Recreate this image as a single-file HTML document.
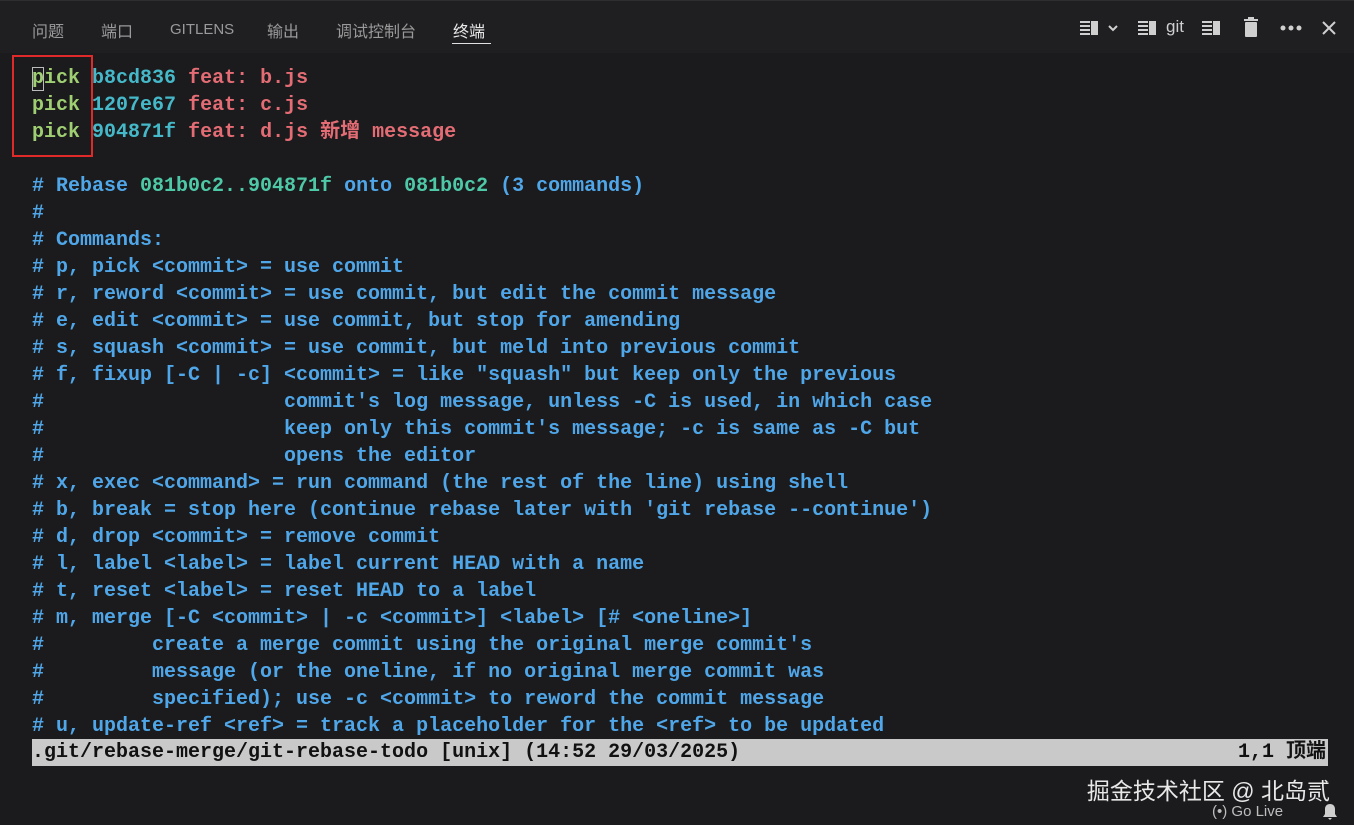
<!DOCTYPE html>
<html><head><meta charset="utf-8"><style>
*{margin:0;padding:0;box-sizing:border-box}
body{width:1354px;height:825px;background:#1b1b1d;overflow:hidden;position:relative;font-family:"Liberation Sans","Noto Sans CJK SC",sans-serif}
.top{position:absolute;left:0;top:0;width:1354px;height:53px;background:#1f1f22;border-top:1px solid #2e2e30}
.tab{position:absolute;top:17px;font-size:16px;color:#9a9a9a}
.tab.act{color:#e8e8e8}
.ul{position:absolute;left:452px;top:42px;width:39px;height:1px;background:#e0e0e0}
.term{position:absolute;left:32px;top:65px;font-family:"Liberation Mono","Noto Sans CJK SC",monospace;font-weight:bold;font-size:20px;line-height:27px;white-space:pre;color:#4fa6e8}
.g{color:#9fcf72}.h{color:#45b9c9}.r{color:#e46c74}.t{color:#4ec9a8}
.box{position:absolute;left:12px;top:55px;width:81px;height:102px;border:2px solid #e02a2a}
.cur{position:absolute;left:32px;top:67px;width:12px;height:24px;border:1px solid #bbb}
.status{position:absolute;left:32px;top:739px;width:1296px;height:27px;background:#c9c9c9;color:#111;font-family:"Liberation Mono","Noto Sans CJK SC",monospace;font-weight:bold;font-size:20px;line-height:27px;white-space:pre}
.ic{position:absolute;fill:#cfcfcf}
</style></head><body>
<div class="top">
<span class="tab" style="left:32px">问题</span>
<span class="tab" style="left:101px">端口</span>
<span class="tab" style="left:170px;font-size:15px;top:20px">GITLENS</span>
<span class="tab" style="left:267px">输出</span>
<span class="tab" style="left:336px">调试控制台</span>
<span class="tab act" style="left:453px">终端</span>
<div class="ul"></div>
<svg class="ic" style="left:1078px;top:17px" width="44" height="20"><rect x="2" y="3" width="10" height="2"/><rect x="2" y="7" width="10" height="2"/><rect x="2" y="11" width="10" height="2"/><rect x="2" y="15" width="10" height="2"/><rect x="13" y="3" width="7" height="14"/><path d="M31 8l4 4 4-4" stroke="#cfcfcf" stroke-width="2" fill="none"/></svg>
<svg class="ic" style="left:1136px;top:17px" width="22" height="20"><rect x="2" y="3" width="10" height="2"/><rect x="2" y="7" width="10" height="2"/><rect x="2" y="11" width="10" height="2"/><rect x="2" y="15" width="10" height="2"/><rect x="13" y="3" width="7" height="14"/></svg>
<span class="tab" style="left:1166px;color:#cfcfcf;font-size:17px;top:16px">git</span>
<svg class="ic" style="left:1200px;top:17px" width="22" height="20"><rect x="2" y="3" width="10" height="2"/><rect x="2" y="7" width="10" height="2"/><rect x="2" y="11" width="10" height="2"/><rect x="2" y="15" width="10" height="2"/><rect x="13" y="3" width="7" height="14"/></svg>
<svg class="ic" style="left:1242px;top:15px" width="18" height="24"><rect x="2" y="3" width="14" height="2"/><rect x="6" y="1" width="6" height="2"/><rect x="3" y="6" width="12" height="15" rx="1"/></svg>
<svg class="ic" style="left:1280px;top:22px" width="22" height="10"><circle cx="3" cy="5" r="2.5"/><circle cx="11" cy="5" r="2.5"/><circle cx="19" cy="5" r="2.5"/></svg>
<svg style="position:absolute;left:1321px;top:19px" width="16" height="16"><path d="M2 2l12 12M14 2L2 14" stroke="#cfcfcf" stroke-width="2"/></svg>
</div>
<div class="cur"></div>
<div class="term"><span class="g">pick</span> <span class="h">b8cd836</span> <span class="r">feat: b.js</span>
<span class="g">pick</span> <span class="h">1207e67</span> <span class="r">feat: c.js</span>
<span class="g">pick</span> <span class="h">904871f</span> <span class="r">feat: d.js 新增 message</span>

# Rebase <span class="t">081b0c2..904871f</span> onto <span class="t">081b0c2</span> (3 commands)
#
# Commands:
# p, pick &lt;commit&gt; = use commit
# r, reword &lt;commit&gt; = use commit, but edit the commit message
# e, edit &lt;commit&gt; = use commit, but stop for amending
# s, squash &lt;commit&gt; = use commit, but meld into previous commit
# f, fixup [-C | -c] &lt;commit&gt; = like "squash" but keep only the previous
#                    commit's log message, unless -C is used, in which case
#                    keep only this commit's message; -c is same as -C but
#                    opens the editor
# x, exec &lt;command&gt; = run command (the rest of the line) using shell
# b, break = stop here (continue rebase later with 'git rebase --continue')
# d, drop &lt;commit&gt; = remove commit
# l, label &lt;label&gt; = label current HEAD with a name
# t, reset &lt;label&gt; = reset HEAD to a label
# m, merge [-C &lt;commit&gt; | -c &lt;commit&gt;] &lt;label&gt; [# &lt;oneline&gt;]
#         create a merge commit using the original merge commit's
#         message (or the oneline, if no original merge commit was
#         specified); use -c &lt;commit&gt; to reword the commit message
# u, update-ref &lt;ref&gt; = track a placeholder for the &lt;ref&gt; to be updated</div>
<div class="box"></div>
<div class="status">.git/rebase-merge/git-rebase-todo [unix] (14:52 29/03/2025)<span style="position:absolute;right:2px;top:0">1,1 顶端</span></div>
<div style="position:absolute;right:24px;top:772px;font-size:23px;color:#e8e8e8">掘金技术社区 @ 北岛贰</div>
<div style="position:absolute;left:1212px;top:803px;font-size:15px;color:#bdbdbd">(•) Go Live</div>
<svg style="position:absolute;left:1322px;top:803px" width="16" height="18"><path d="M8 1c-3 0-5 2-5 5v5l-2 3h14l-2-3V6c0-3-2-5-5-5zM6 15h4l-2 2z" fill="#cfcfcf"/></svg>
</body></html>
